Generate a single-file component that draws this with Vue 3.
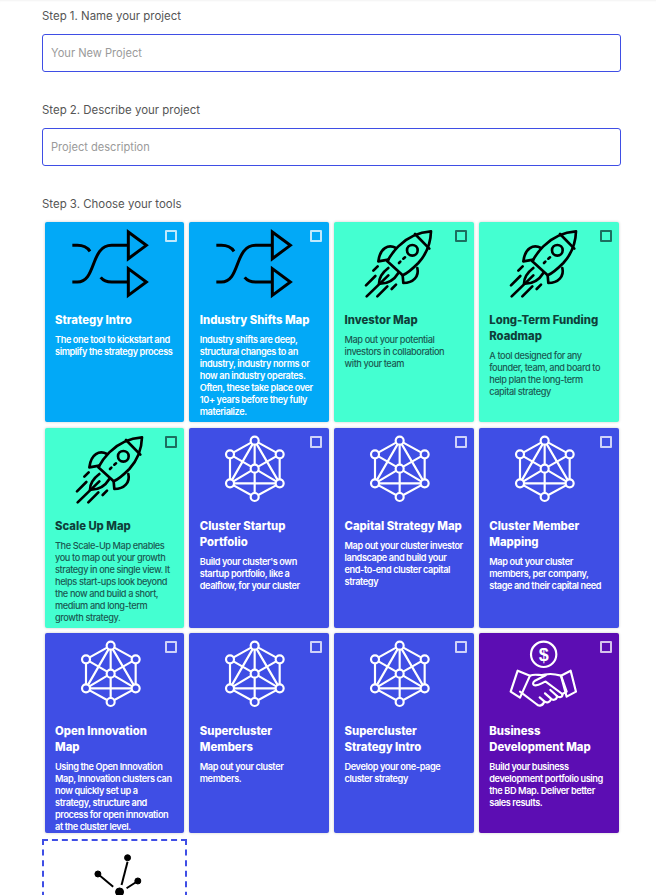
<script setup>
const tools = [
  { title: "Strategy Intro", text: "The one tool to kickstart and\nsimplify the strategy process", color: "blue", icon: "shuffle" },
  { title: "Industry Shifts Map", text: "Industry shifts are deep,\nstructural changes to an\nindustry, industry norms or\nhow an industry operates.\nOften, these take place over\n10+ years before they fully\nmaterialize.", color: "blue", icon: "shuffle" },
  { title: "Investor Map", text: "Map out your potential\ninvestors in collaboration\nwith your team", color: "teal", icon: "rocket" },
  { title: "Long-Term Funding\nRoadmap", text: "A tool designed for any\nfounder, team, and board to\nhelp plan the long-term\ncapital strategy", color: "teal", icon: "rocket" },
  { title: "Scale Up Map", text: "The Scale-Up Map enables\nyou to map out your growth\nstrategy in one single view. It\nhelps start-ups look beyond\nthe now and build a short,\nmedium and long-term\ngrowth strategy.", color: "teal", icon: "rocket" },
  { title: "Cluster Startup\nPortfolio", text: "Build your cluster's own\nstartup portfolio, like a\ndealflow, for your cluster", color: "indigo", icon: "network" },
  { title: "Capital Strategy Map", text: "Map out your cluster investor\nlandscape and build your\nend-to-end cluster capital\nstrategy", color: "indigo", icon: "network" },
  { title: "Cluster Member\nMapping", text: "Map out your cluster\nmembers, per company,\nstage and their capital need", color: "indigo", icon: "network" },
  { title: "Open Innovation\nMap", text: "Using the Open Innovation\nMap, Innovation clusters can\nnow quickly set up a\nstrategy, structure and\nprocess for open innovation\nat the cluster level.", color: "indigo", icon: "network" },
  { title: "Supercluster\nMembers", text: "Map out your cluster\nmembers.", color: "indigo", icon: "network" },
  { title: "Supercluster\nStrategy Intro", text: "Develop your one-page\ncluster strategy", color: "indigo", icon: "network" },
  { title: "Business\nDevelopment Map", text: "Build your business\ndevelopment portfolio using\nthe BD Map. Deliver better\nsales results.", color: "purple", icon: "deal" },
];

const nodes = [[209, 47], [135, 88], [284, 88], [209, 131], [135, 175], [284, 175], [209, 216]];
const edges = [[0, 1], [0, 2], [1, 4], [2, 5], [4, 6], [5, 6], [0, 6], [0, 4], [0, 5], [1, 3], [2, 3], [4, 3], [5, 3], [4, 5]];
</script>

<template>
  <div class="page">
    <label class="step step--first">Step 1. Name your project</label>
    <input class="field" type="text" placeholder="Your New Project" />
    <label class="step">Step 2. Describe your project</label>
    <input class="field" type="text" placeholder="Project description" />
    <label class="step">Step 3. Choose your tools</label>

    <div class="tools">
      <div v-for="tool in tools" :key="tool.title" class="card" :class="'card--' + tool.color">
        <input class="card__check" type="checkbox" />
        <svg class="card__icon" viewBox="12 9 420 246" fill="none" stroke="currentColor" stroke-linecap="round" stroke-linejoin="round">
          <g v-if="tool.icon === 'shuffle'" stroke-width="9" stroke="#000" stroke-linecap="butt" stroke-linejoin="miter" transform="translate(-3 -3)">
            <path d="M97 82H112C130 82 142 88 150 100" />
            <path d="M97 192H112C170 192 150 82 215 82H265" />
            <path d="M182 178C190 188 200 192 215 192H265" />
            <path d="M265 42L319 82L265 122Z" />
            <path d="M265 152L319 192L265 232Z" />
          </g>
          <g v-else-if="tool.icon === 'rocket'" stroke-width="8" stroke="#000" transform="translate(0 -3)">
            <path d="M303 40C270 42 235 55 205 85C190 100 180 115 172 130L218 172C235 165 250 150 265 135C290 108 302 75 303 40Z" />
            <path d="M255 48L298 92" />
            <circle cx="247" cy="97" r="16" />
            <path d="M207 135L211 131M220 122L225 118" />
            <path d="M198 90C175 78 150 90 145 130L175 125" />
            <path d="M262 150C268 175 250 195 220 195L218 172" />
            <path d="M175 150C155 165 147 180 147 197C170 198 190 190 205 165" />
            <path d="M130 158L143 145M108 202L136 174M110 235L175 172M142 235L172 205M185 213L198 200" />
          </g>
          <g v-else-if="tool.icon === 'network'" stroke-width="6.5">
            <line v-for="e in edges" :key="e.join('-')" :x1="nodes[e[0]][0]" :y1="nodes[e[0]][1]" :x2="nodes[e[1]][0]" :y2="nodes[e[1]][1]" />
            <circle v-for="n in nodes" :key="n.join('-')" class="card__node" :cx="n[0]" :cy="n[1]" r="12" />
          </g>
          <g v-else stroke-width="6.5">
            <circle cx="206" cy="73" r="38" />
            <text x="206" y="92" text-anchor="middle" class="card__dollar">$</text>
            <path d="M128 122L165 137L135 203L107 185Z" />
            <path d="M258 137L287 122L303 185L275 200Z" />
            <path d="M165 137C180 130 195 138 210 134C225 130 240 132 258 137L275 185L262 192" />
            <path d="M212 136L180 152C172 158 172 166 182 166C195 166 205 155 212 155L262 192C264 202 252 204 246 198L226 180" />
            <path d="M246 198C246 210 234 212 228 206L210 190M228 206C226 218 214 220 208 214L194 202M208 214C204 228 192 230 184 222L135 185" />
          </g>
        </svg>
        <h3 class="card__title">{{ tool.title }}</h3>
        <p class="card__text">{{ tool.text }}</p>
      </div>

      <div class="add">
        <svg class="add__icon" viewBox="0 0 141 54" fill="#000" stroke="#000">
          <line x1="83.7" y1="20.7" x2="77.7" y2="44" stroke-width="2" />
          <line x1="54" y1="33" x2="69.3" y2="45.7" stroke-width="2" />
          <line x1="94" y1="40" x2="82.7" y2="47.3" stroke-width="2" />
          <circle cx="83.7" cy="16.7" r="3" />
          <circle cx="54" cy="33" r="3" />
          <circle cx="94" cy="40" r="3" />
          <circle cx="75.7" cy="51" r="4" />
        </svg>
      </div>
    </div>
  </div>
</template>

<style>
html,
body {
  margin: 0;
  height: 895px;
  overflow: hidden;
  background: #fff;
}
</style>

<style scoped>
.page {
  box-sizing: border-box;
  height: 895px;
  overflow: hidden;
  padding: 0 35px 0 42px;
  font-family: Inter, "Open Sans", sans-serif;
  box-shadow: inset 0 2px 2px -1px rgba(0, 0, 0, 0.05);
}
.step {
  display: block;
  box-sizing: border-box;
  height: 25px;
  margin-top: 31px;
  font-size: 11.45px;
  line-height: 14px;
  color: #555;
}
.step--first {
  height: 34px;
  margin-top: 0;
  padding-top: 9px;
}
.field {
  display: block;
  box-sizing: border-box;
  width: 100%;
  height: 38px;
  padding: 0 8px;
  border: 1px solid #3f4ee5;
  border-radius: 3px;
  outline: none;
  font-family: inherit;
  font-size: 11.1px;
}
.field::placeholder {
  color: #9a9a9a;
}
.tools {
  display: grid;
  grid-template-columns: repeat(4, 1fr);
  row-gap: 5.5px;
}
.card {
  position: relative;
  box-sizing: border-box;
  height: 200px;
  margin: 0 2.5px;
  padding: 0 10.5px;
  border-radius: 2px;
  overflow: hidden;
  color: #fff;
  box-shadow: 0 0 3px rgba(0, 0, 0, 0.2);
}
.card--blue {
  background: #02a9f7;
}
.card--teal {
  background: #44ffd1;
  color: #0f3f3a;
}
.card--indigo {
  background: #3f4ee5;
}
.card--purple {
  background: #5c0db3;
}
.card__check {
  appearance: none;
  position: absolute;
  top: 8px;
  right: 7px;
  width: 12px;
  height: 12px;
  margin: 0;
  color: inherit;
  border: 2px solid currentColor;
  border-radius: 1px;
  opacity: 0.75;
}
.card__icon {
  display: block;
  width: 140px;
  height: 82px;
  margin: 0 -10.5px 8px;
}
.card--indigo .card__node {
  fill: #3f4ee5;
}
.card__dollar {
  font-family: "Liberation Sans", sans-serif;
  font-size: 54px;
  font-weight: 700;
  fill: currentColor;
  stroke: none;
}
.card__title {
  margin: 0 0 6px;
  font-size: 11.3px;
  font-weight: 800;
  line-height: 16px;
  white-space: pre-line;
}
.card__text {
  margin: 0;
  font-size: 9.2px;
  font-weight: 600;
  line-height: 12px;
  letter-spacing: -0.4px;
  white-space: pre-line;
}
.card--teal .card__text {
  color: #1a5a52;
  font-weight: 500;
}
.add {
  box-sizing: border-box;
  height: 80px;
  margin-top: 0.5px;
  border: 2px dashed #3f4ee5;
}
.add__icon {
  display: block;
  width: 100%;
  height: 54px;
}
</style>
